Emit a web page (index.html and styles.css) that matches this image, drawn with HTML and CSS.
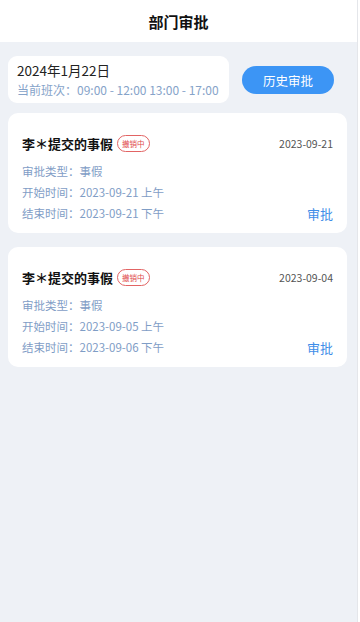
FILE: index.html
```html
<!DOCTYPE html>
<html lang="zh">
<head>
<meta charset="utf-8">
<link rel="stylesheet" href="styles.css">
</head>
<body>
<div class="app">
  <div class="page">
    <header class="header">部门审批</header>
    <section class="top">
      <div class="today">
        <div class="date">2024年1月22日</div>
        <div class="shift">当前班次：09:00 - 12:00 13:00 - 17:00</div>
      </div>
      <button class="history">历史审批</button>
    </section>
    <section class="list">
      <div class="card">
        <div class="card-head">
          <div class="title">李＊提交的事假</div>
          <span class="badge">撤销中</span>
          <span class="cdate">2023-09-21</span>
        </div>
        <div class="line">审批类型：事假</div>
        <div class="line">开始时间：2023-09-21 上午</div>
        <div class="line last"><span>结束时间：2023-09-21 下午</span><a class="act">审批</a></div>
      </div>
      <div class="card">
        <div class="card-head">
          <div class="title">李＊提交的事假</div>
          <span class="badge">撤销中</span>
          <span class="cdate">2023-09-04</span>
        </div>
        <div class="line">审批类型：事假</div>
        <div class="line">开始时间：2023-09-05 上午</div>
        <div class="line last"><span>结束时间：2023-09-06 下午</span><a class="act">审批</a></div>
      </div>
    </section>
  </div>
  <div class="rail"></div>
</div>
</body>
</html>
```
FILE: styles.css
```css
html, body { margin: 0; padding: 0; }
body {
  font-family: "Noto Sans CJK SC", "Noto Sans", sans-serif;
  background: #eef1f6;
  width: 360px;
  height: 622px;
  overflow: hidden;
}
.app { display: flex; height: 622px; }
.page { flex: 1; background: #eef1f6; }
.rail { width: 3px; background: #fff; border-left: 1px solid #e4e6ea; box-sizing: border-box; }
.header {
  height: 42px; background: #fff; display: flex; align-items: center; justify-content: center;
  font-size: 15px; font-weight: 700; color: #111;
}
.top { display: flex; align-items: center; padding: 14px 0 0 8px; gap: 13px; }
.today {
  width: 221px; box-sizing: border-box; background: #fff; border-radius: 9px;
  padding: 5px 0 4px 9px; height: 47px;
}
.date { font-size: 13.5px; color: #222; line-height: 19px; }
.shift { font-size: 12px; color: #86a3c9; line-height: 19px; }
.history {
  width: 92px; height: 28px; border: 0; border-radius: 14px; background: #3c95f5;
  color: #fff; font-family: inherit; font-size: 12.5px; padding: 0; margin-top: 1px;
}
.list { display: flex; flex-direction: column; gap: 14px; padding: 10px 10px 0 8px; }
.card { background: #fff; border-radius: 10px; padding: 19px 14px 11px 14px; height: 120px; box-sizing: border-box; }
.card-head { display: flex; align-items: center; height: 22px; margin-bottom: 7px; }
.title { font-size: 13px; font-weight: 700; color: #111; }
.badge {
  margin-left: 4px; font-size: 7.5px; color: #e04848; border: 1.5px solid #e26464; border-radius: 9px;
  height: 15px; line-height: 15px; padding: 0 4px; box-sizing: content-box;
}
.cdate { margin-left: auto; font-size: 10.5px; color: #555; }
.line { font-size: 11.5px; color: #7f9dc6; line-height: 21px; }
.line.last { display: flex; justify-content: space-between; }
.act { color: #3f8ee8; font-size: 13px; }
```
